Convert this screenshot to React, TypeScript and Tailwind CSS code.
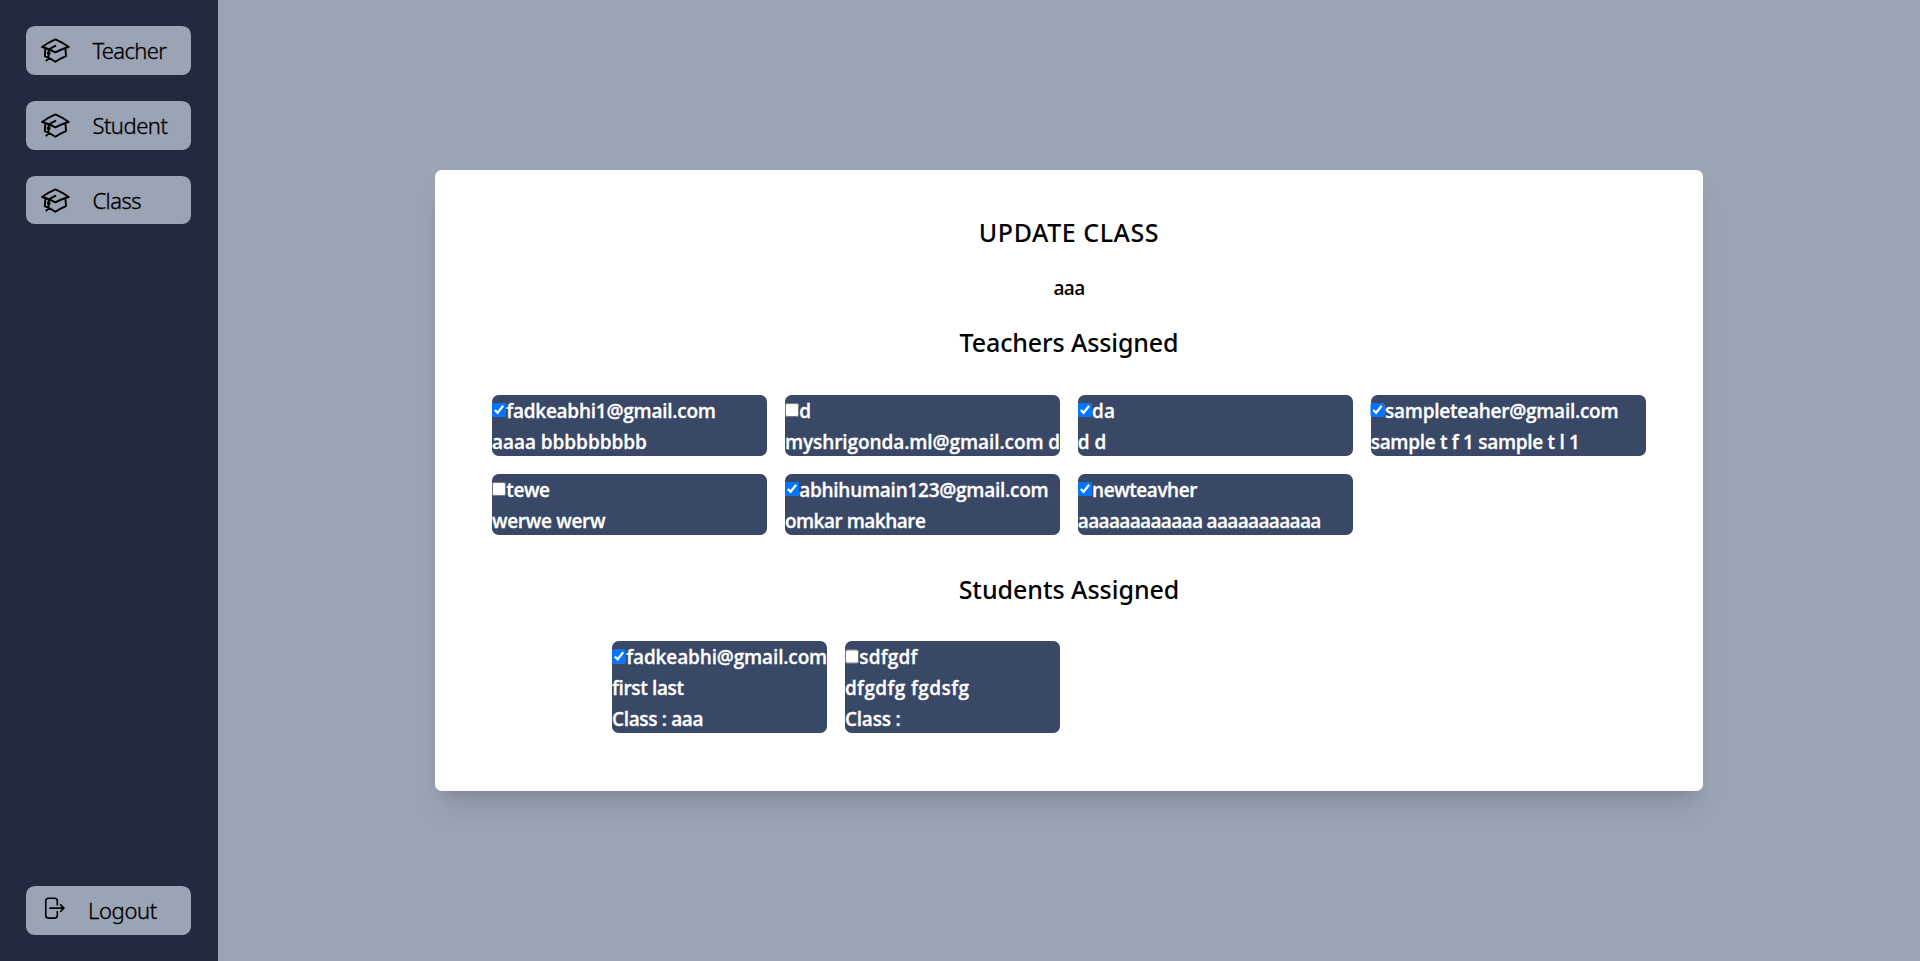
type Line = { text: string; tracking: string };
type Entry = { checked: boolean; label: Line; lines: Line[] };

const teachers: Entry[] = [
  {
    checked: true,
    label: { text: 'fadkeabhi1@gmail.com', tracking: 'tracking-[-0.25px]' },
    lines: [{ text: 'aaaa bbbbbbbbb', tracking: 'tracking-[-0.05px]' }],
  },
  {
    checked: false,
    label: { text: 'd', tracking: 'tracking-normal' },
    lines: [{ text: 'myshrigonda.ml@gmail.com d', tracking: 'tracking-[-0.08px]' }],
  },
  {
    checked: true,
    label: { text: 'da', tracking: 'tracking-normal' },
    lines: [{ text: 'd d', tracking: 'tracking-normal' }],
  },
  {
    checked: true,
    label: { text: 'sampleteaher@gmail.com', tracking: 'tracking-[-0.25px]' },
    lines: [{ text: 'sample t f 1 sample t l 1', tracking: 'tracking-[-0.3px]' }],
  },
  {
    checked: false,
    label: { text: 'tewe', tracking: 'tracking-[-0.4px]' },
    lines: [{ text: 'werwe werw', tracking: 'tracking-[-0.3px]' }],
  },
  {
    checked: true,
    label: { text: 'abhihumain123@gmail.com', tracking: 'tracking-[-0.26px]' },
    lines: [{ text: 'omkar makhare', tracking: 'tracking-[-0.5px]' }],
  },
  {
    checked: true,
    label: { text: 'newteavher', tracking: 'tracking-[-0.45px]' },
    lines: [{ text: 'aaaaaaaaaaaa aaaaaaaaaaa', tracking: 'tracking-[-0.65px]' }],
  },
];

const students: Entry[] = [
  {
    checked: true,
    label: { text: 'fadkeabhi@gmail.com', tracking: 'tracking-[-0.14px]' },
    lines: [
      { text: 'first last', tracking: 'tracking-[-0.35px]' },
      { text: 'Class : aaa', tracking: 'tracking-[-0.35px]' },
    ],
  },
  {
    checked: false,
    label: { text: 'sdfgdf', tracking: 'tracking-[0.2px]' },
    lines: [
      { text: 'dfgdfg fgdsfg', tracking: 'tracking-[0.4px]' },
      { text: 'Class :', tracking: 'tracking-[-0.2px]' },
    ],
  },
];

const nav: Line[] = [
  { text: 'Teacher', tracking: 'tracking-[-0.65px]' },
  { text: 'Student', tracking: 'tracking-[-0.5px]' },
  { text: 'Class', tracking: 'tracking-[-0.5px]' },
];

function AcademicCap() {
  return (
    <svg className="size-[30.8px] shrink-0" viewBox="0 0 24 24" fill="none" stroke="currentColor" strokeWidth={1.5} strokeLinecap="round" strokeLinejoin="round">
      <path d="M4.26 10.147a60.436 60.436 0 00-.491 6.347A48.627 48.627 0 0112 20.904a48.627 48.627 0 018.232-4.41 60.46 60.46 0 00-.491-6.347m-15.482 0a50.57 50.57 0 00-2.658-.813A59.905 59.905 0 0112 3.493a59.902 59.902 0 0110.399 5.84c-.896.248-1.783.52-2.658.814m-15.482 0A50.697 50.697 0 0112 13.489a50.702 50.702 0 017.74-3.342M6.75 15a.75.75 0 100-1.5.75.75 0 000 1.5zm0 0v-3.675A55.378 55.378 0 0112 8.443m-7.007 11.55A5.981 5.981 0 006.75 15.75v-1.5" />
    </svg>
  );
}

function LogoutIcon() {
  return (
    <svg className="mb-[5px] size-[26.4px] shrink-0" viewBox="0 0 24 24" fill="none" stroke="currentColor" strokeWidth={1.5} strokeLinecap="round" strokeLinejoin="round">
      <path d="M15.75 9V5.25A2.25 2.25 0 0013.5 3h-6a2.25 2.25 0 00-2.25 2.25v13.5A2.25 2.25 0 007.5 21h6a2.25 2.25 0 002.25-2.25V15m3 0l3-3m0 0l-3-3m3 3H9" />
    </svg>
  );
}

function EntryCard({ entry }: { entry: Entry }) {
  return (
    <div className="whitespace-nowrap rounded-[6.6px] bg-[#394867] text-[19px] font-semibold leading-[28.68px] text-white [-webkit-text-stroke:0.3px_#ffffff]">
      <label className="flex items-center">
        <input type="checkbox" defaultChecked={entry.checked} className="-ml-[0.3px] mr-[0.3px] size-[14.3px] shrink-0" />
        <span className={`pt-[2px] ${entry.label.tracking}`}>{entry.label.text}</span>
      </label>
      {entry.lines.map((line) => (
        <p key={line.text} className={`pt-[2px] ${line.tracking}`}>{line.text}</p>
      ))}
    </div>
  );
}

export default function App() {
  return (
    <div className="flex h-[961px] bg-[#9ba4b5] font-['Open_Sans','Noto_Sans',sans-serif] text-black">
      <aside className="flex w-[218px] shrink-0 flex-col justify-between bg-[#212a3e] p-[26.4px] font-['Noto_Sans',sans-serif] text-[22px] font-light [-webkit-text-stroke:0.35px_#000000]">
        <nav className="flex flex-col gap-[26.2px]">
          {nav.map((item) => (
            <button key={item.text} className="flex h-[48.5px] w-[164.6px] items-center gap-[22px] rounded-[8.8px] bg-[#9ba4b5] pl-[13.2px]">
              <AcademicCap />
              <span className={item.tracking}>{item.text}</span>
            </button>
          ))}
        </nav>
        <button className="flex h-[48.7px] w-[164.6px] items-center gap-[22px] rounded-[8.8px] bg-[#9ba4b5] pl-[13.2px]">
          <LogoutIcon />
          <span className="tracking-[-0.35px]">Logout</span>
        </button>
      </aside>

      <main className="flex flex-1 items-center justify-center">
        <section className="flex h-[621px] w-[1268px] flex-col items-center rounded-[6.6px] bg-white pt-[45px] shadow-[0_22px_28px_-6px_rgba(0,0,0,0.1),0_9px_11px_-7px_rgba(0,0,0,0.1)]">
          <h1 className="font-['Noto_Sans',sans-serif] text-[25px] font-medium leading-[35.2px] tracking-[0.55px]">UPDATE CLASS</h1>
          <p className="mt-[23px] text-[19px] font-semibold leading-[30.8px] tracking-[-0.7px]">aaa</p>
          <h2 className="mt-[21px] font-['Noto_Sans',sans-serif] text-[25px] font-medium leading-[35.2px] tracking-[-0.12px]">Teachers Assigned</h2>
          <div className="mt-[34.8px] grid w-[1154px] grid-cols-4 gap-[17.6px]">
            {teachers.map((entry) => (
              <EntryCard key={entry.label.text} entry={entry} />
            ))}
          </div>
          <h2 className="mt-[36.6px] font-['Noto_Sans',sans-serif] text-[25px] font-medium leading-[35.2px] tracking-[-0.03px]">Students Assigned</h2>
          <div className="mt-[34px] grid w-[914px] grid-cols-4 gap-[17.6px]">
            {students.map((entry) => (
              <EntryCard key={entry.label.text} entry={entry} />
            ))}
          </div>
        </section>
      </main>
    </div>
  );
}
